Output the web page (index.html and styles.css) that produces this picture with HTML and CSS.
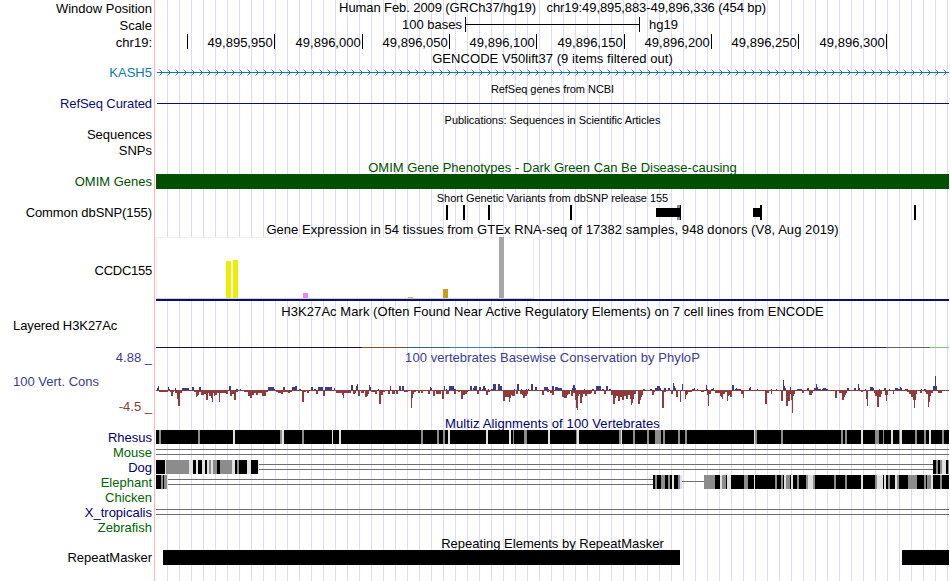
FILE: index.html
```
<!DOCTYPE html>
<html>
<head>
    <meta charset="utf-8">
    <title>Human chr19:49,895,883-49,896,336 Genome Browser</title>
    <link rel="stylesheet" href="styles.css">
</head>
<body>
    <div class="browser">
        <div class="row row-head">
            <div class="label">Window Position</div>
            <div class="title title-head">Human Feb. 2009 (GRCh37/hg19) &nbsp; chr19:49,895,883-49,896,336 (454 bp)</div>
        </div>
        <div class="row row-head">
            <div class="label">Scale</div>
            <svg class="plot" viewBox="156 17 793 17" width="793" height="17">
                <text x="462" y="29" text-anchor="end">100 bases</text>
                <path d="M465 17h1v7h173v-7h1v15h-1v-7h-173v7h-1z"/>
                <text x="649" y="29">hg19</text>
            </svg>
        </div>
        <div class="row row-head">
            <div class="label">chr19:</div>
            <svg class="plot" id="ruler" viewBox="156 34 793 17" width="793" height="17"></svg>
        </div>

        <div class="title">GENCODE V50lift37 (9 items filtered out)</div>
        <div class="row">
            <div class="label gencode">KASH5</div>
            <svg class="plot" id="gencode" viewBox="156 65 793 15" width="793" height="15"></svg>
        </div>

        <div class="title small">RefSeq genes from NCBI</div>
        <div class="row">
            <div class="label refseq tight">RefSeq Curated</div>
            <svg class="plot" viewBox="156 96 793 15" width="793" height="15">
                <rect x="157" y="103" width="792" height="1" fill="#0c0c78"/>
            </svg>
        </div>

        <div class="title small">Publications: Sequences in Scientific Articles</div>
        <div class="row row-sequences">
            <div class="label">Sequences</div>
        </div>
        <div class="row row-snps">
            <div class="label">SNPs</div>
        </div>

        <div class="title title-plain omim">OMIM Gene Phenotypes - Dark Green Can Be Disease-causing</div>
        <div class="row">
            <div class="label omim">OMIM Genes</div>
            <div class="omim-bar"></div>
        </div>

        <div class="title small">Short Genetic Variants from dbSNP release 155</div>
        <div class="row row-dbsnp">
            <div class="label tight">Common dbSNP(155)</div>
            <svg class="plot" viewBox="156 205 793 15" width="793" height="15">
                <path d="M446 205h2v15h-2zM463 205h2v15h-2zM488 205h2v15h-2zM570 205h2v15h-2zM914 205h2v15h-2z"/>
                <rect x="677" y="205" width="3" height="15" fill="#8c8c8c"/>
                <path d="M656 208h24v-3h1v15h-1v-3h-24zM753 208h7v-3h2v15h-2v-3h-7z"/>
            </svg>
        </div>

        <div class="title title-gtex">Gene Expression in 54 tissues from GTEx RNA-seq of 17382 samples, 948 donors (V8, Aug 2019)</div>
        <div class="row row-gtex">
            <div class="label tighter">CCDC155</div>
            <svg class="plot" viewBox="156 237 793 64" width="793" height="64">
                <rect x="156" y="237" width="378" height="62" fill="#f0f0f0"/>
                <rect x="157" y="238" width="376" height="60" fill="#fff"/>
                <rect x="156" y="298" width="378" height="1" fill="#d2d2d2"/>
                <rect x="226" y="261" width="5" height="37" fill="#eeee00"/>
                <rect x="233" y="260" width="5" height="38" fill="#eeee00"/>
                <rect x="303" y="293" width="5" height="5" fill="#ee82ee"/>
                <rect x="408" y="297" width="5" height="1" fill="#9acd32"/>
                <rect x="443" y="289" width="5" height="9" fill="#cd9b1d"/>
                <rect x="499" y="237" width="5" height="61" fill="#a6a6a6"/>
                <rect x="156" y="299" width="793" height="2" fill="#0c0c78"/>
            </svg>
        </div>

        <div class="title">H3K27Ac Mark (Often Found Near Active Regulatory Elements) on 7 cell lines from ENCODE</div>
        <div class="row row-h3k">
            <div class="label label-left tight">Layered H3K27Ac</div>
            <svg class="plot" viewBox="156 318 793 32" width="793" height="32">
                <rect x="156" y="347" width="206" height="1" fill="#1a1230"/>
                <rect x="362" y="347" width="44" height="1" fill="#6e5a32"/>
                <rect x="406" y="347" width="43" height="1" fill="#3c6464"/>
                <rect x="449" y="347" width="44" height="1" fill="#3c78c8"/>
                <rect x="493" y="347" width="44" height="1" fill="#3c6464"/>
                <rect x="537" y="347" width="349" height="1" fill="#26265c"/>
                <rect x="886" y="347" width="44" height="1" fill="#646464"/>
                <rect x="930" y="347" width="19" height="1" fill="#78c86e"/>
            </svg>
        </div>

        <div class="row row-cons">
            <div class="cons-labels">
                <div class="label cons">4.88 _</div>
                <div class="label label-left cons">100 Vert. Cons</div>
                <div class="label cons-neg">-4.5 _</div>
            </div>
            <div class="cons-plot">
                <div class="title-inner cons">100 vertebrates Basewise Conservation by PhyloP</div>
                <svg class="plot" id="phylop" viewBox="156 365 793 51" width="793" height="51"></svg>
            </div>
        </div>

        <div class="title title-multiz multiz">Multiz Alignments of 100 Vertebrates</div>
        <div class="row">
            <div class="label multiz">Rhesus</div>
            <svg class="plot" id="rhesus" viewBox="156 0 793 15" width="793" height="15"></svg>
        </div>
        <div class="row">
            <div class="label species">Mouse</div>
            <svg class="plot" id="mouse" viewBox="156 0 793 15" width="793" height="15"></svg>
        </div>
        <div class="row">
            <div class="label multiz">Dog</div>
            <svg class="plot" id="dog" viewBox="156 0 793 15" width="793" height="15"></svg>
        </div>
        <div class="row">
            <div class="label species">Elephant</div>
            <svg class="plot" id="elephant" viewBox="156 0 793 15" width="793" height="15"></svg>
        </div>
        <div class="row">
            <div class="label species">Chicken</div>
        </div>
        <div class="row">
            <div class="label multiz">X_tropicalis</div>
            <svg class="plot" id="xtropicalis" viewBox="156 0 793 15" width="793" height="15"></svg>
        </div>
        <div class="row row-last-species">
            <div class="label species">Zebrafish</div>
        </div>

        <div class="title title-plain">Repeating Elements by RepeatMasker</div>
        <div class="row">
            <div class="label">RepeatMasker</div>
            <svg class="plot" viewBox="156 550 793 15" width="793" height="15">
                <path d="M163 550h517v15h-517zM902 550h47v15h-47z"/>
            </svg>
        </div>
    </div>

    <script src="tracks.js"></script>
</body>
</html>
```
FILE: styles.css
```
body {
    margin: 0;
    background: #fff;
    color: #000;
    font-family: "Liberation Sans", Arial, Helvetica, sans-serif;
    font-size: 13px;
}
.browser {
    box-sizing: border-box;
    width: 949px;
    height: 581px;
    overflow: hidden;
    /* pink divider, then a guide line every 12px */
    background:
        linear-gradient(#ffb4b4, #ffb4b4) 154px 0 / 1px 100% no-repeat,
        repeating-linear-gradient(to right, #dcdcf8 0, #dcdcf8 1px, transparent 1px, transparent 12px) 167px 0 / 782px 100% no-repeat;
}
.row {
    display: grid;
    grid-template-columns: 152px 793px;
    column-gap: 4px;
    height: 15px;
    line-height: 15px;
}
.row-head {
    height: 17px;
    line-height: 17px;
}
.row-sequences {
    height: 16px;
}
.row-snps,
.row-dbsnp {
    height: 17px;
}
.row-gtex {
    height: 67px;
    line-height: 67px;
}
.row-h3k {
    height: 32px;
}
.row-cons {
    height: 66px;
}
.row-last-species {
    height: 16px;
}
.label {
    text-align: right;
    white-space: nowrap;
}
.label-left {
    text-align: left;
    padding-left: 13px;
}
.tight {
    letter-spacing: -0.09px;
}
.tighter {
    letter-spacing: -0.25px;
}
.title {
    height: 14px;
    line-height: 15px;
    margin-left: 156px;
    text-align: center;
    white-space: nowrap;
    letter-spacing: 0.055px;
}
.title-head {
    height: 17px;
    margin-left: 0;
    letter-spacing: -0.09px;
}
.title-gtex {
    height: 15px;
}
.title-multiz {
    letter-spacing: 0.11px;
}
.title-plain {
    letter-spacing: 0;
}
.title-inner {
    height: 15px;
    text-align: center;
    letter-spacing: 0.06px;
}
.small {
    height: 16px;
    line-height: 18px;
    font-size: 11px;
    letter-spacing: -0.04px;
}
.plot {
    display: block;
    shape-rendering: crispEdges;
}
.gencode {
    color: #0c78b4;
}
.refseq {
    color: #0c0c78;
}
.omim {
    color: #005000;
}
.omim-bar {
    background: #005000;
}
.cons-labels {
    display: grid;
    grid-template-rows: 24px 25px 15px;
    height: 64px;
}
.cons {
    color: #3c3c8c;
}
.cons-neg {
    color: #8c3c3c;
}
.multiz {
    color: #00006e;
}
.species {
    color: #006400;
}
```
FILE: tracks.js
```
const SVG_NS = 'http://www.w3.org/2000/svg';
const RIGHT = 949;
const SHADES = { k: '#000000', g: '#8c8c8c', l: '#e1e1e1' };

function add(svg, name, attrs, text) {
    const el = document.createElementNS(SVG_NS, name);
    for (const key in attrs) {
        el.setAttribute(key, attrs[key]);
    }
    if (text) {
        el.textContent = text;
    }
    svg.appendChild(el);
}

function rect(svg, x, y, width, height, fill) {
    add(svg, 'rect', { x, y, width, height, fill });
}

// Ruler
const ruler = document.getElementById('ruler');
const ticks = [
    [187, ''], [274, '49,895,950'], [362, '49,896,000'], [449, '49,896,050'], [536, '49,896,100'],
    [624, '49,896,150'], [711, '49,896,200'], [798, '49,896,250'], [886, '49,896,300']
];
ticks.forEach(([x, name]) => {
    rect(ruler, x, 34, 1, 15, '#000');
    add(ruler, 'text', { x: x - 1.3, y: 47, 'text-anchor': 'end' }, name);
});

// Gene line with strand arrows
const gencode = document.getElementById('gencode');
rect(gencode, 157, 72, 792, 1, '#0c78b4');
for (let x = 159; x < RIGHT - 3; x += 8) {
    for (let i = 1; i <= 3; i++) {
        const shade = i === 3 ? '#86bcda' : '#3d93c3';
        rect(gencode, x + 3 - i, 72 - i, 1, 1, shade);
        rect(gencode, x + 3 - i, 72 + i, 1, 1, shade);
    }
}

// PhyloP scores: x, width, height
const conserved = `157,1,2 158,1,4 168,1,3 169,1,1 175,1,2 182,7,2 192,2,3 199,2,3 229,2,4 236,2,1 240,1,1 268,6,3 274,1,1
283,2,3 292,5,3 295,2,4 299,2,1 311,2,3 314,2,1 318,5,3 325,7,3 334,1,2 351,2,5 356,1,4 357,1,6 369,1,5 370,1,3 378,1,1
390,1,4 399,2,4 402,2,4 430,1,3 431,1,2 444,1,4 446,1,1 449,5,4 454,2,1 470,2,4 473,1,2 474,3,4 479,2,3 482,1,1 483,2,4
485,1,2 488,1,1 491,2,1 493,3,6 498,2,6 500,2,4 514,1,1 517,2,6 521,1,1 526,1,1 528,1,1 531,2,6 535,2,3 544,4,3 548,1,1
552,2,4 555,3,3 558,4,2 572,1,2 573,2,5 575,1,2 584,1,1 592,2,1 596,5,4 602,2,1 606,2,4 609,2,1 643,2,1 650,2,1
655,2,2 657,3,4 660,1,2 664,2,2 668,2,2 673,1,7 674,1,4 675,1,2 682,1,6 692,2,1 694,1,2 697,1,1 706,1,5 707,1,1
711,3,1 713,1,2 732,2,5 735,6,1 736,1,2 749,1,2 750,1,3 757,1,1 771,1,1 776,1,1 783,1,10 784,1,4 785,1,2 790,1,3
797,2,1 799,3,1 807,2,2 814,2,2 816,1,6 817,1,3 818,3,1 822,6,1 823,3,2 847,2,2 854,2,2 858,1,6 859,1,2 865,1,1
870,3,3 873,1,2 879,1,1 884,2,2 889,1,1 895,3,2 898,2,1 900,1,3 901,1,2 905,3,1 921,1,1 924,2,1 933,2,4 935,1,14 936,1,4`;
const accelerated = `159,9,2 170,4,2 171,2,6 175,3,3 177,1,9 178,2,16 180,2,3 194,2,2 196,1,7 197,1,6 198,1,5 199,7,2 201,3,5 204,2,4
206,2,10 208,1,3 209,2,6 211,1,8 212,1,12 213,1,3 214,1,6 215,2,5 217,2,3 219,1,12 220,6,3 226,2,4 230,2,6 232,2,4 234,2,10
236,2,2 244,4,2 248,2,6 250,2,8 252,2,5 254,2,3 256,2,5 258,4,3 262,4,6 266,2,2 276,2,2 278,3,3 281,2,4 283,9,2 288,2,3
302,2,12 304,2,2 307,2,3 316,2,4 323,2,6 336,6,3 342,1,5 343,1,8 344,7,3 353,2,4 355,1,3 358,2,6 361,3,3 365,2,7 367,1,6
368,1,4 371,4,2 375,2,4 379,2,14 381,2,5 383,2,2 388,2,4 392,3,4 396,2,4 404,4,2 411,1,18 412,1,8 413,1,4 414,2,2 418,2,3
421,2,3 428,2,4 433,2,6 436,1,4 437,4,4 442,2,9 446,3,4 454,2,4 458,2,2 461,2,9 463,2,5 465,2,4 467,1,2 477,2,4 486,2,5
488,2,2 503,2,11 505,4,7 509,1,12 510,1,8 511,1,5 512,3,6 516,2,4 520,2,4 522,1,5 523,2,8 525,2,6 527,1,4 542,2,5
547,2,2 550,2,3 552,2,5 562,2,7 564,3,8 567,1,5 568,2,4 571,2,6 573,2,3 575,1,10 576,1,18 577,1,20 578,1,6 579,1,4
580,2,13 582,1,7 583,2,4 585,2,6 587,4,4 591,1,3 594,2,4 604,2,4 611,2,5 613,2,14 615,1,8 616,2,6 618,2,11 620,2,7
622,2,10 624,2,6 626,2,9 628,2,5 630,1,9 631,1,15 632,1,13 633,1,9 634,2,4 638,2,14 640,1,10 641,1,7 642,1,5 652,2,5
654,1,2 662,2,18 664,2,2 671,2,4 676,2,7 680,1,12 685,1,9 686,1,5 687,1,4 688,4,2 701,3,2 707,1,5 708,1,16 709,2,4
715,5,3 720,1,6 721,1,7 722,1,9 723,2,4 725,2,2 727,1,11 728,1,6 729,1,5 730,2,7 741,2,4 743,1,8 765,2,14 767,2,3
771,1,4 781,2,11 786,2,16 788,2,11 790,1,4 791,1,10 792,1,23 793,1,6 794,1,4 802,2,3 809,3,5 812,1,3 835,2,8 839,3,3
842,2,10 844,1,7 845,1,5 846,1,3 861,2,2 866,1,9 867,1,16 874,1,3 875,2,6 877,2,17 879,2,7 881,1,4 885,1,5 886,1,11
887,1,5 893,1,4 907,2,2 909,2,4 911,2,7 913,1,10 914,1,18 915,1,10 916,1,4 920,2,3 925,1,2 926,2,4 928,1,17 929,1,12
930,1,6 931,2,3 938,4,3`;

function parse(list) {
    return list.split(/\s+/).map(item => item.split(',').map(Number));
}

const phylop = document.getElementById('phylop');
rect(phylop, 156, 390, 793, 1, '#8c3c3c');
parse(conserved).forEach(([x, w, h]) => rect(phylop, x, 390 - h, w, h, '#3c3c8c'));
parse(accelerated).forEach(([x, w, h]) => rect(phylop, x, 390, w, h, '#8c3c3c'));

// Alignments: blocks are a shade letter, x and width
function blocks(id, list) {
    const svg = document.getElementById(id);
    list.split(/\s+/).forEach(item => {
        const [x, w] = item.slice(1).split(',').map(Number);
        rect(svg, x, 0, w, 14, SHADES[item[0]]);
    });
}

function gapLines(id, from, to) {
    const svg = document.getElementById(id);
    rect(svg, from, 4, to - from, 1, '#6e6e6e');
    rect(svg, from, 9, to - from, 1, '#6e6e6e');
}

blocks('rhesus', `k156,793 g159,2 g198,2 l233,2 g280,2 l282,2 g302,2 l332,1 l339,2 g421,2 g437,2 g443,2 l448,2 l486,2 l509,2
g513,1 g524,3 l548,2 g576,1 l577,2 g619,2 l621,1 g633,2 g647,2 g655,6 g663,2 g678,2 g685,2 l754,1 g755,2 g781,2 g841,2
g845,2 l861,2 g875,4 g883,1 l891,2 g899,1 l900,2 g915,2 g924,2 l929,2 g942,2`);

gapLines('mouse', 156, RIGHT);

gapLines('dog', 259, 933);
blocks('dog', `l156,103 k156,9 g166,23 k193,3 k198,4 k205,2 g209,2 g213,4 k217,3 g220,12 k235,2 g237,2 k239,8 k251,7
k933,3 g936,2 k938,2 g940,2 l942,4 k946,2 g948,1`);

gapLines('elephant', 168, 653);
rect(document.getElementById('elephant'), 682, 6, 22, 1, '#6e6e6e');
blocks('elephant', `k156,5 g161,2 k163,1 g164,3 l167,1 k653,27 g655,2 g661,4 g668,2 l672,2 g678,2 l680,2 g704,11 k715,234
l720,2 g722,4 l727,4 g744,4 l754,1 g775,2 g781,2 l784,2 g786,4 l791,2 g797,2 g806,2 l808,5 g813,2 g834,2 g845,2 l861,2
g875,2 l877,6 l884,2 g888,2 l895,2 g897,2 g908,9 g924,2 g927,4 l931,2 g940,2`);

gapLines('xtropicalis', 156, RIGHT);
```
